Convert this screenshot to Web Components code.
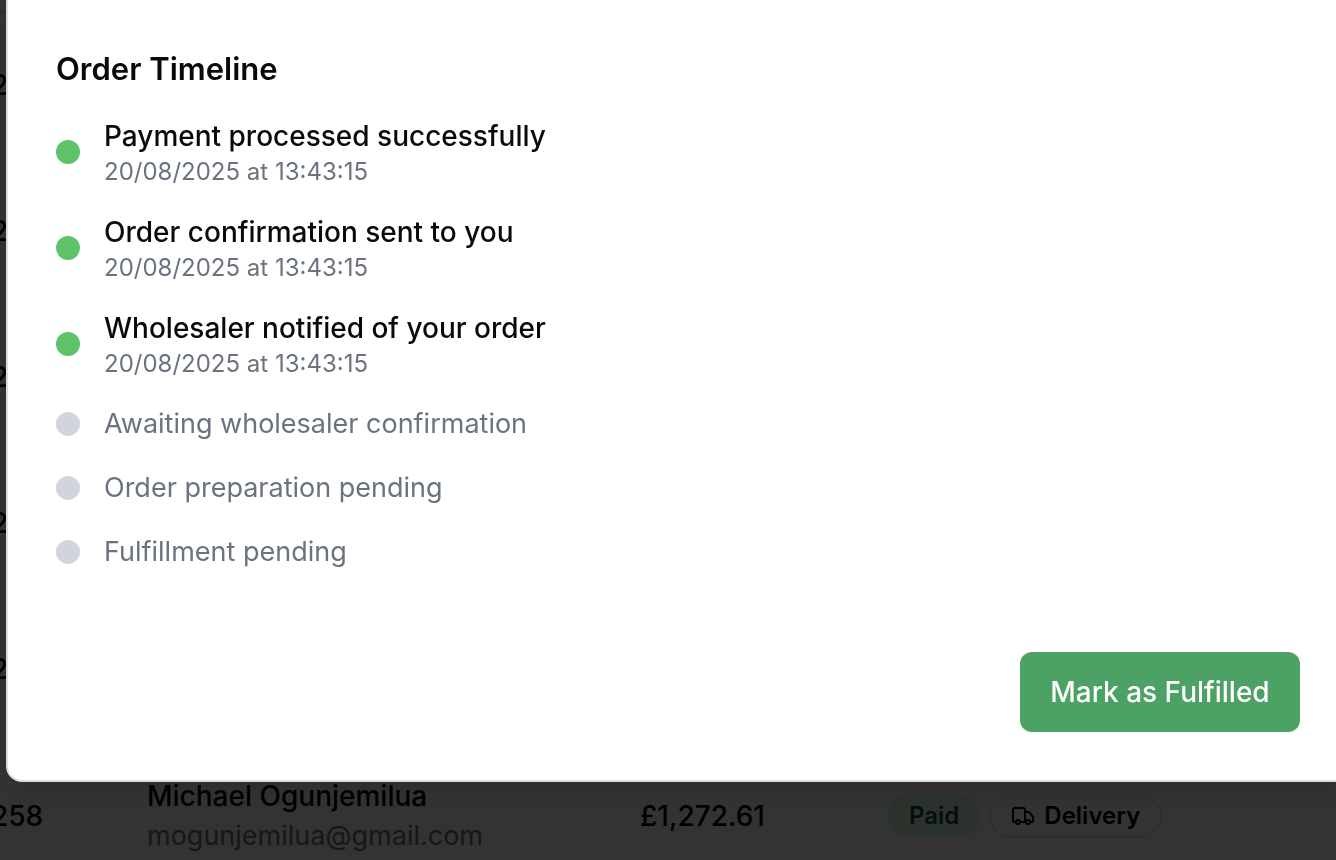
<!DOCTYPE html>
<html lang="en">
<head>
<meta charset="utf-8">
<title>Orders</title>
<style>
body { margin: 0; min-height: 100vh; overflow: hidden; background: #fff; color: #000; font-family: Inter, "Liberation Sans", sans-serif; }
</style>
</head>
<body>
<orders-table></orders-table>
<modal-dialog label="Order details">
  <order-timeline heading="Order Timeline">
    <timeline-item done time="20/08/2025 at 13:43:15">Payment processed successfully</timeline-item>
    <timeline-item done time="20/08/2025 at 13:43:15">Order confirmation sent to you</timeline-item>
    <timeline-item done time="20/08/2025 at 13:43:15">Wholesaler notified of your order</timeline-item>
    <timeline-item>Awaiting wholesaler confirmation</timeline-item>
    <timeline-item>Order preparation pending</timeline-item>
    <timeline-item>Fulfillment pending</timeline-item>
  </order-timeline>
  <action-button slot="footer">Mark as Fulfilled</action-button>
</modal-dialog>
<script>
class BaseElement extends HTMLElement {
  connectedCallback() {
    if (this.shadowRoot) return;
    this.attachShadow({ mode: "open" }).innerHTML = this.render();
  }
}

customElements.define("status-pill", class extends BaseElement {
  render() {
    return `<style>
      :host { display: inline-flex; align-items: center; gap: 9px; box-sizing: border-box; height: 44px; padding: 0 20px;
        border: 2px solid #e5e7eb; border-radius: 22px; font-size: 24px; font-weight: 600; line-height: 32px; }
      :host([tone="paid"]) { background: #dcf7e5; border-color: transparent; color: #14532d; }
    </style><slot name="icon"></slot><slot></slot>`;
  }
});

customElements.define("truck-icon", class extends BaseElement {
  render() {
    return `<style>:host { display: block; width: 24px; height: 24px; } svg { display: block; }</style>
    <svg width="24" height="24" viewBox="0 0 24 24" fill="none" stroke="currentColor" stroke-width="2" stroke-linecap="round" stroke-linejoin="round" aria-hidden="true">
      <path d="M14 18V6a2 2 0 0 0-2-2H4a2 2 0 0 0-2 2v11a1 1 0 0 0 1 1h2"/><path d="M15 18H9"/>
      <path d="M19 18h2a1 1 0 0 0 1-1v-3.65a1 1 0 0 0-.22-.624l-3.48-4.35A1 1 0 0 0 17.52 8H14"/>
      <circle cx="17" cy="18" r="2"/><circle cx="7" cy="18" r="2"/></svg>`;
  }
});

customElements.define("orders-table", class extends BaseElement {
  render() {
    const empty = `<tr><td class="id">2</td><td></td><td></td><td></td></tr>`;
    return `<style>
      :host { display: block; overflow: hidden; font-size: 28px; line-height: 40px; font-weight: 500; }
      table { width: calc(100% + 9px); margin: 11px 0 0 -9px; border-collapse: collapse; table-layout: fixed; }
      td { box-sizing: border-box; height: 146px; padding: 0; border-top: 2px solid #e5e7eb; vertical-align: middle; white-space: nowrap; }
      .c1 { width: 156px; } .c2 { width: 493px; } .c3 { width: 247px; }
      .mail { color: #6b7280; font-size: 27px; font-weight: 400; }
      .pills { display: flex; gap: 8px; }
    </style>
    <table><colgroup><col class="c1"><col class="c2"><col class="c3"><col></colgroup>
    <tbody>${empty.repeat(5)}
      <tr><td class="id">258</td>
        <td><div>Michael Ogunjemilua</div><div class="mail">mogunjemilua@gmail.com</div></td>
        <td>£1,272.61</td>
        <td><div class="pills"><status-pill tone="paid">Paid</status-pill><status-pill><truck-icon slot="icon"></truck-icon>Delivery</status-pill></div></td></tr>
    </tbody></table>`;
  }
});

customElements.define("modal-dialog", class extends BaseElement {
  render() {
    return `<style>
      :host { position: fixed; inset: 0; overflow: hidden; background: rgba(0, 0, 0, .8); }
      section { position: absolute; top: -16px; left: 6px; right: -14px; box-sizing: border-box; padding: 58px 48px 48px;
        border: 2px solid #dededc; border-radius: 16px; background: #fff; color: #0a0a0a;
        box-shadow: 0 20px 30px -6px rgba(0, 0, 0, .1), 0 8px 12px -8px rgba(0, 0, 0, .1); }
      footer { display: flex; justify-content: flex-end; margin-top: 80px; }
    </style><section role="dialog" aria-modal="true" aria-label="${this.getAttribute("label")}"><slot></slot><footer><slot name="footer"></slot></footer></section>`;
  }
});

customElements.define("order-timeline", class extends BaseElement {
  render() {
    return `<style>
      :host { display: block; }
      h3 { margin: 0 0 22px; font-size: 31px; line-height: 50px; font-weight: 600; }
      div { display: flex; flex-direction: column; gap: 24px; }
    </style><h3>${this.getAttribute("heading")}</h3><div role="list"><slot></slot></div>`;
  }
});

customElements.define("timeline-item", class extends BaseElement {
  render() {
    const time = this.getAttribute("time");
    this.setAttribute("role", "listitem");
    return `<style>
      :host { display: flex; align-items: center; gap: 24px; color: #6b7280; }
      .dot { flex: none; width: 24px; height: 24px; border-radius: 50%; background: #d1d5db; }
      :host([done]) .dot { background: #5fc267; }
      p { margin: 0; font-size: 27px; line-height: 40px; font-weight: 400; }
      :host([done]) p { color: #0a0a0a; font-size: 28px; font-weight: 500; }
      time { display: block; font-size: 24px; line-height: 32px; }
    </style><span class="dot"></span><div><p><slot></slot></p>${time ? `<time>${time}</time>` : ""}</div>`;
  }
});

customElements.define("action-button", class extends BaseElement {
  render() {
    return `<style>
      :host { display: block; }
      button { min-width: 280px; height: 80px; padding: 0 24px; border: 0; border-radius: 12px; background: #4ca164; color: #fff;
        font: 500 28px/40px Inter, "Liberation Sans", sans-serif; cursor: pointer; }
    </style><button type="button"><slot></slot></button>`;
  }
});
</script>
</body>
</html>
